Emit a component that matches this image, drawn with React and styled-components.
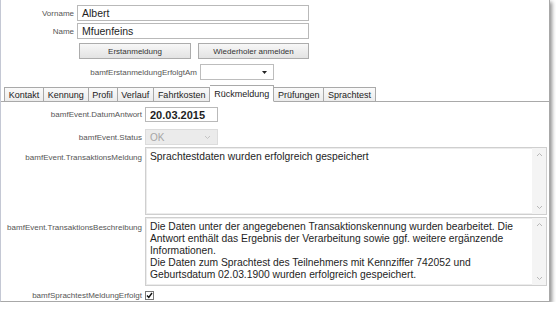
import React from 'react';
import styled, { createGlobalStyle } from 'styled-components';

const GlobalStyle = createGlobalStyle`
  body {
    margin: 0;
    background: #ffffff;
    font-family: "Liberation Sans", Arial, sans-serif;
  }
`;

const Frame = styled.div`
  width: 548px;
  height: 296px;
  border-left: 1px solid #c4c8d4;
  border-right: 1px solid #a8a8a8;
  border-bottom: 1px solid #a8a8a8;
  box-shadow: 2px 2px 4px rgba(0, 0, 0, 0.45);
  background: #fff;
  padding-top: 5px;
  box-sizing: content-box;
  overflow: hidden;
`;

const FieldRow = styled.div`
  display: grid;
  grid-template-columns: ${({ $labelWidth }) => $labelWidth}px auto;
  column-gap: 3px;
  align-items: ${({ $top }) => ($top ? 'start' : 'center')};
  margin-top: ${({ $gap }) => $gap || 0}px;
`;

const Label = styled.label`
  font-size: 8px;
  color: #555;
  text-align: right;
  white-space: nowrap;
  padding-top: ${({ $pad }) => $pad || 0}px;
`;

const TextInput = styled.div`
  width: ${({ $width }) => $width}px;
  height: ${({ $height }) => $height || 16}px;
  box-sizing: border-box;
  border: 1px solid #b9b9b9;
  padding-left: 4px;
  display: flex;
  align-items: center;
  font-size: ${({ $bold }) => ($bold ? 11 : 10.5)}px;
  font-weight: ${({ $bold }) => ($bold ? 700 : 400)};
  color: #1e1e1e;
`;

const ButtonRow = styled.div`
  display: flex;
  gap: 7px;
  margin: 4px 0 0 78px;
`;

const Button = styled.div`
  width: ${({ $width }) => $width}px;
  height: 16px;
  box-sizing: border-box;
  border: 1px solid #acacac;
  background: linear-gradient(#f7f7f7, #e3e3e3);
  font-size: 8px;
  color: #333;
  display: flex;
  align-items: center;
  justify-content: center;
`;

const Select = styled.div`
  width: ${({ $width }) => $width}px;
  height: ${({ $height }) => $height}px;
  box-sizing: border-box;
  border: 1px solid ${({ $disabled }) => ($disabled ? '#dcdcdc' : '#bdbdbd')};
  background: ${({ $disabled }) => ($disabled ? '#ebebeb' : '#fff')};
  color: #a6a6a6;
  font-size: 10px;
  display: flex;
  align-items: center;
  justify-content: space-between;
  padding: 0 6px 0 4px;
`;

const TabBar = styled.div`
  display: flex;
  align-items: flex-end;
  height: 16px;
  margin-top: 5px;
  padding-left: 3px;
  border-bottom: 1px solid #a9a9a9;
`;

const Tab = styled.div`
  height: ${({ $active }) => ($active ? 17 : 15)}px;
  box-sizing: border-box;
  margin-bottom: -1px;
  padding: 0 ${({ $active }) => ($active ? 4 : 3.75)}px;
  border: 1px solid #a9a9a9;
  border-left-width: ${({ $first }) => ($first ? 1 : 0)}px;
  border-bottom-color: ${({ $active }) => ($active ? '#fff' : '#a9a9a9')};
  background: ${({ $active }) => ($active ? '#fff' : 'linear-gradient(#fafafa, #ececec)')};
  font-size: 9px;
  color: #222;
  display: flex;
  align-items: center;
`;

const Panel = styled.div`
  padding-top: 5px;
`;

const Memo = styled.div`
  width: 402px;
  height: ${({ $height }) => $height}px;
  box-sizing: border-box;
  border: 1px solid #cfcfcf;
  box-shadow: inset 0 0 0 1px #ececec;
  display: flex;
`;

const MemoText = styled.div`
  flex: 1;
  padding: 3px 4px;
  font-size: 10.3px;
  line-height: 12px;
  color: #1e1e1e;
  white-space: pre-line;
`;

const ScrollTrack = styled.div`
  width: 14px;
  background: #f4f4f4;
  display: flex;
  flex-direction: column;
  justify-content: space-between;
  align-items: center;
  padding: 4px 0;
`;

const Check = styled.div`
  width: 9px;
  height: 9px;
  box-sizing: border-box;
  border: 1px solid #777;
  background: #fff;
  display: flex;
  align-items: center;
  justify-content: center;
`;

const Chevron = ({ up, color = '#b8b8b8' }) => (
  <svg width="7" height="5" viewBox="0 0 7 5">
    <path d={up ? 'M1 4 L3.5 1.5 L6 4' : 'M1 1 L3.5 3.5 L6 1'} fill="none" stroke={color} strokeWidth="1" />
  </svg>
);

const ScrollMemo = ({ height, children }) => (
  <Memo $height={height}>
    <MemoText>{children}</MemoText>
    <ScrollTrack>
      <Chevron up />
      <Chevron />
    </ScrollTrack>
  </Memo>
);

const tabs = ['Kontakt', 'Kennung', 'Profil', 'Verlauf', 'Fahrtkosten', 'Rückmeldung', 'Prüfungen', 'Sprachtest'];

export default function App() {
  return (
    <>
      <GlobalStyle />
      <Frame>
        <FieldRow $labelWidth={73}>
          <Label>Vorname</Label>
          <TextInput $width={232}>Albert</TextInput>
        </FieldRow>
        <FieldRow $labelWidth={73} $gap={2}>
          <Label>Name</Label>
          <TextInput $width={232}>Mfuenfeins</TextInput>
        </FieldRow>
        <ButtonRow>
          <Button $width={112}>Erstanmeldung</Button>
          <Button $width={111}>Wiederholer anmelden</Button>
        </ButtonRow>
        <FieldRow $labelWidth={196} $gap={5}>
          <Label>bamfErstanmeldungErfolgtAm</Label>
          <Select $width={74} $height={16}>
            <span />
            <svg width="5" height="3" viewBox="0 0 5 3">
              <path d="M0 0 H5 L2.5 3 Z" fill="#222" />
            </svg>
          </Select>
        </FieldRow>
        <TabBar>
          {tabs.map((t, i) => (
            <Tab key={t} $first={i === 0} $active={t === 'Rückmeldung'}>{t}</Tab>
          ))}
        </TabBar>
        <Panel>
          <FieldRow $labelWidth={141}>
            <Label>bamfEvent.DatumAntwort</Label>
            <TextInput $width={73} $height={15} $bold>20.03.2015</TextInput>
          </FieldRow>
          <FieldRow $labelWidth={141} $gap={7}>
            <Label>bamfEvent.Status</Label>
            <Select $width={73} $height={16} $disabled>
              <span>OK</span>
              <Chevron color="#c4c4c4" />
            </Select>
          </FieldRow>
          <FieldRow $labelWidth={141} $gap={2} $top>
            <Label $pad={6}>bamfEvent.TransaktionsMeldung</Label>
            <ScrollMemo height={68}>Sprachtestdaten wurden erfolgreich gespeichert</ScrollMemo>
          </FieldRow>
          <FieldRow $labelWidth={141} $gap={2} $top>
            <Label $pad={6}>bamfEvent.TransaktionsBeschreibung</Label>
            <ScrollMemo height={69}>
              {'Die Daten unter der angegebenen Transaktionskennung wurden bearbeitet. Die Antwort enthält das Ergebnis der Verarbeitung sowie ggf. weitere ergänzende Informationen.\nDie Daten zum Sprachtest des Teilnehmers mit Kennziffer 742052 und Geburtsdatum 02.03.1900 wurden erfolgreich gespeichert.'}
            </ScrollMemo>
          </FieldRow>
          <FieldRow $labelWidth={141} $gap={5}>
            <Label>bamfSprachtestMeldungErfolgt</Label>
            <Check>
              <svg width="7" height="7" viewBox="0 0 7 7">
                <path d="M1 3.5 L2.8 5.5 L6 1" fill="none" stroke="#111" strokeWidth="1.4" />
              </svg>
            </Check>
          </FieldRow>
        </Panel>
      </Frame>
    </>
  );
}
